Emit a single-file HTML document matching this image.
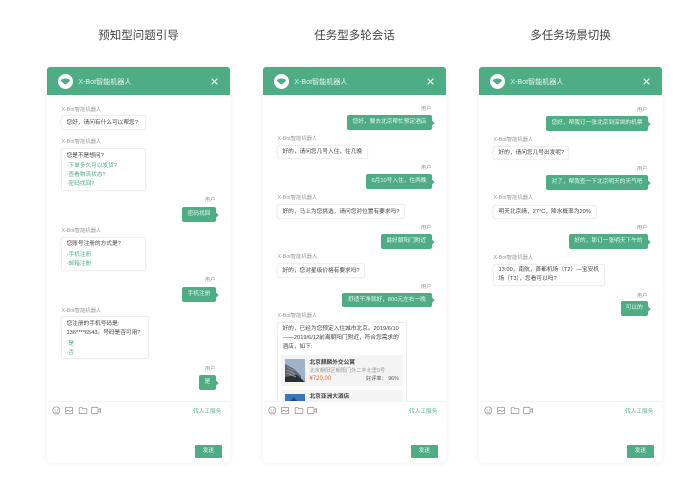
<!DOCTYPE html>
<html lang="zh"><head><meta charset="utf-8"><title>X-Bot</title>
<style>
html,body{margin:0;padding:0;background:#fff}
body{position:relative;width:700px;height:489px;overflow:hidden;font-family:"Liberation Sans","Noto Sans CJK SC",sans-serif;color:#555}
#w{position:absolute;left:0;top:0;width:700px;height:489px;filter:blur(.25px)}
h2{position:absolute;top:28px;margin:0;width:183px;text-align:center;font-size:11.5px;line-height:16px;font-weight:400;color:#444}
.c{position:absolute;top:0;width:183px;height:489px}
.bg{position:absolute;left:0;top:67px;width:183px;height:396px;background:#fff;border-radius:5px;box-shadow:0 0 6px rgba(0,0,0,.07)}
.hd{position:absolute;left:0;top:67px;width:183px;height:28px;background:#4fad85;border-radius:3px 3px 0 0}
.hd svg{position:absolute}
.ti{position:absolute;left:31.3px;top:9.500px;line-height:10px;font-size:7.100px;color:#e8f5ef;white-space:nowrap}
.m{position:absolute;left:0;top:0;width:183px;height:401px;overflow:hidden}
.t{position:absolute;margin-top:.4px;line-height:10px;font-size:5.7px;white-space:nowrap;color:#444}
.n{left:14.5px;font-size:5.3px;color:#999}
.r{right:14.5px;font-size:5.3px;color:#999}
.g{left:19.5px;color:#4fad85}
.x{left:19.5px}
.b{position:absolute;left:14px;background:#fff;border:.5px solid #efefef;border-radius:2px;box-sizing:border-box;box-shadow:0 0 2px rgba(0,0,0,.04)}
.b:before{content:"";position:absolute;left:-2px;top:4px;width:3px;height:3px;background:#fff;transform:rotate(45deg);border-left:.5px solid #efefef;border-bottom:.5px solid #efefef;box-sizing:border-box}
.u{position:absolute;right:14px;height:14.5px;background:#4fad85;border-radius:2px;color:#e9f6f0;font-size:5.7px;line-height:14.5px;text-align:center;white-space:nowrap}
.u:after{content:"";position:absolute;right:-1.5px;top:5.5px;width:3.5px;height:3.5px;background:#4fad85;transform:rotate(45deg)}
.ln{position:absolute;left:0;top:401px;width:183px;height:1px;background:#f4f4f4}
.ic{position:absolute;left:0;top:405px}
.lk{position:absolute;left:146px;top:406.500px;line-height:10px;font-size:5.7px;color:#5fb392;white-space:nowrap}
.bt{position:absolute;left:148px;top:445px;width:26.5px;height:12.500px;background:#4fad85;border-radius:1px;color:#e9f6f0;font-size:5.7px;line-height:12.500px;text-align:center}
.h{position:absolute;left:18px;width:122px;height:31px;background:#f4f4f4;border-radius:1px}
.im{position:absolute;left:4px;top:4px;width:20px;height:23px;overflow:hidden}
.hn{position:absolute;left:28.5px;line-height:8px;font-size:5.7px;color:#333;white-space:nowrap}
</style></head><body><div id="w">
<h2 style="left:47px">预知型问题引导</h2>
<h2 style="left:263px">任务型多轮会话</h2>
<h2 style="left:479px">多任务场景切换</h2>

<div class="c" style="left:47px">
<div class="bg"></div>
<div class="hd">
<svg style="left:11px;top:6.5px" width="15" height="15" viewBox="0 0 15 15"><circle cx="7.5" cy="7.5" r="7.5" fill="#fff"/><path d="M3 6.200C4.500 4 10.500 4 12 6.200C11.500 8 10 8.500 9.500 9C9 10.500 6 10.500 5.500 9C5 8.500 3.500 8 3 6.200Z" fill="#4fad85"/></svg>
<div class="ti">X-Bot智能机器人</div>
<svg style="left:164px;top:10.500px" width="7" height="7" viewBox="0 0 7 7"><path d="M.6.6L6.400 6.400M6.400.6L.6 6.400" stroke="#fff" stroke-width="1.100"/></svg>
</div>
<div class="m">
<div class="t n" style="top:104.500px">X-Bot智能机器人</div>
<div class="b" style="top:115px;width:85px;height:15px"></div>
<div class="t x" style="top:117.500px">您好，请问有什么可以帮您?</div>
<div class="t n" style="top:137px">X-Bot智能机器人</div>
<div class="b" style="top:148px;width:85px;height:43px"></div>
<div class="t x" style="top:150.500px">您是不是想问?</div>
<div class="t g" style="top:161px">·下单多久可以发货?</div>
<div class="t g" style="top:170px">·查看物流状态?</div>
<div class="t g" style="top:179px">·密码找回?</div>
<div class="t r" style="top:195px">用户</div>
<div class="u" style="top:207px;width:34px">密码找回</div>
<div class="t n" style="top:225.700px">X-Bot智能机器人</div>
<div class="b" style="top:236.500px;width:85px;height:34.500px"></div>
<div class="t x" style="top:238.700px">您账号注册的方式是?</div>
<div class="t g" style="top:249.700px">·手机注册</div>
<div class="t g" style="top:258.700px">·邮箱注册</div>
<div class="t r" style="top:275px">用户</div>
<div class="u" style="top:287px;width:34px">手机注册</div>
<div class="t n" style="top:305.500px">X-Bot智能机器人</div>
<div class="b" style="top:316px;width:87.500px;height:43px"></div>
<div class="t x" style="top:318.500px">您注册的手机号码是:</div>
<div class="t x" style="top:327.500px">136****6543。号码是否可用?</div>
<div class="t g" style="top:338.500px">·是</div>
<div class="t g" style="top:347.500px">·否</div>
<div class="t r" style="top:364px">用户</div>
<div class="u" style="top:375px;width:17px">是</div>
</div>
<div class="ln"></div>
<svg class="ic" width="60" height="12" viewBox="0 0 60 12" fill="none" stroke="#999" stroke-width=".8"><circle cx="9.300" cy="5.500" r="3.600"/><path d="M8 4.500v1M10.600 4.500v1M7.800 6.800c1 .8 2 .8 3 0"/><rect x="18.500" y="2.300" width="7" height="6.400" rx=".7"/><path d="M18.500 6.800L21 5l2 1.500 2.500-1.500"/><path d="M32.200 3.200a.6.6 0 0 1 .6-.6h2.200l.8 1h3.400a.6.6 0 0 1 .6.6v3.900a.6.6 0 0 1-.6.6h-6.400a.6.6 0 0 1-.6-.6z"/><rect x="44.500" y="2.300" width="6.500" height="6.400" rx=".7"/><path d="M51 5l2.500-1.500v4L51 6"/></svg>
<div class="lk">转人工服务</div>
<div class="bt">发送</div>
</div>

<div class="c" style="left:263px">
<div class="bg"></div>
<div class="hd">
<svg style="left:11px;top:6.500px" width="15" height="15" viewBox="0 0 15 15"><circle cx="7.500" cy="7.500" r="7.500" fill="#fff"/><path d="M3 6.200C4.500 4 10.500 4 12 6.200C11.500 8 10 8.500 9.500 9C9 10.500 6 10.500 5.500 9C5 8.500 3.500 8 3 6.200Z" fill="#4fad85"/></svg>
<div class="ti">X-Bot智能机器人</div>
<svg style="left:164px;top:10.500px" width="7" height="7" viewBox="0 0 7 7"><path d="M.6.6L6.400 6.400M6.400.6L.6 6.400" stroke="#fff" stroke-width="1.100"/></svg>
</div>
<div class="m">
<div class="t r" style="top:104px">用户</div>
<div class="u" style="top:115px;width:85px">您好，要去北京帮忙预定酒店</div>
<div class="t n" style="top:133.700px">X-Bot智能机器人</div>
<div class="b" style="top:144.500px;width:90.500px;height:14.500px"></div>
<div class="t x" style="top:146.800px">好的，请问您几号入住，住几晚</div>
<div class="t r" style="top:163px">用户</div>
<div class="u" style="top:174px;width:66px">6月10号入住，住两晚</div>
<div class="t n" style="top:192.700px">X-Bot智能机器人</div>
<div class="b" style="top:204px;width:127.500px;height:14.500px"></div>
<div class="t x" style="top:206.200px">好的，马上为您挑选，请问您对位置有要求吗?</div>
<div class="t r" style="top:222.700px">用户</div>
<div class="u" style="top:234px;width:51.500px">最好朝阳门附近</div>
<div class="t n" style="top:252px">X-Bot智能机器人</div>
<div class="b" style="top:263px;width:87.500px;height:14.500px"></div>
<div class="t x" style="top:265.200px">好的，您对星级价格有要求吗?</div>
<div class="t r" style="top:281.500px">用户</div>
<div class="u" style="top:292.500px;width:90px">舒适干净就好，800元左右一晚</div>
<div class="t n" style="top:311px">X-Bot智能机器人</div>
<div class="b" style="top:322px;width:129.500px;height:90px"></div>
<div class="t x" style="top:324px">好的，已经为您预定入住城市北京。2019/6/10</div>
<div class="t x" style="top:333px">——2019/6/12前离朝阳门附近，符合您需求的</div>
<div class="t x" style="top:341.700px">酒店，如下:</div>
<div class="h" style="top:355px">
<div class="im"><svg width="20" height="23" viewBox="0 0 20 23"><rect width="20" height="23" fill="#9fb2c8"/><path d="M0 5L9 10L16 17V23H0Z" fill="#5f646c"/><path d="M0 18L12 16L20 23H0Z" fill="#2e3033"/><path d="M2 8L9 12M2 11L10 15M2 14L11 18" stroke="#a5a8ad" stroke-width=".7"/></svg></div>
<div class="hn" style="top:3.500px;font-weight:700;color:#444">北京麒麟外交公寓</div>
<div class="hn" style="top:11.500px;font-size:5.200px;color:#999">北京朝阳区朝阳门外二丰北里9号</div>
<div class="hn" style="top:20px;color:#e0693d;font-size:6px">¥720.00</div>
<div class="hn" style="left:85px;top:20px;font-size:5.200px;color:#555">好评率： 96%</div>
</div>
<div class="h" style="top:389.500px">
<div class="im"><svg width="20" height="23" viewBox="0 0 20 23"><rect width="20" height="23" fill="#3a76b8"/><path d="M0 12L9 3L16 12V23H0Z" fill="#234a78"/></svg></div>
<div class="hn" style="top:3px;font-weight:700;color:#444">北京亚洲大酒店</div>
</div>
</div>
<div class="ln"></div>
<svg class="ic" width="60" height="12" viewBox="0 0 60 12" fill="none" stroke="#999" stroke-width=".8"><circle cx="9.300" cy="5.500" r="3.600"/><path d="M8 4.500v1M10.600 4.500v1M7.800 6.800c1 .8 2 .8 3 0"/><rect x="18.500" y="2.300" width="7" height="6.400" rx=".7"/><path d="M18.500 6.800L21 5l2 1.500 2.500-1.500"/><path d="M32.200 3.200a.6.6 0 0 1 .6-.6h2.200l.8 1h3.400a.6.6 0 0 1 .6.6v3.900a.6.6 0 0 1-.6.6h-6.400a.6.6 0 0 1-.6-.6z"/><rect x="44.500" y="2.300" width="6.500" height="6.400" rx=".7"/><path d="M51 5l2.500-1.500v4L51 6"/></svg>
<div class="lk">转人工服务</div>
<div class="bt">发送</div>
</div>

<div class="c" style="left:479px">
<div class="bg"></div>
<div class="hd">
<svg style="left:11px;top:6.500px" width="15" height="15" viewBox="0 0 15 15"><circle cx="7.500" cy="7.500" r="7.500" fill="#fff"/><path d="M3 6.200C4.500 4 10.500 4 12 6.200C11.500 8 10 8.500 9.500 9C9 10.500 6 10.500 5.500 9C5 8.500 3.500 8 3 6.200Z" fill="#4fad85"/></svg>
<div class="ti">X-Bot智能机器人</div>
<svg style="left:164px;top:10.500px" width="7" height="7" viewBox="0 0 7 7"><path d="M.6.6L6.400 6.400M6.400.6L.6 6.400" stroke="#fff" stroke-width="1.100"/></svg>
</div>
<div class="m">
<div class="t r" style="top:105px">用户</div>
<div class="u" style="top:116px;width:102px">您好，帮我订一张北京到深圳的机票</div>
<div class="t n" style="top:135px">X-Bot智能机器人</div>
<div class="b" style="top:145.500px;width:76px;height:14.500px"></div>
<div class="t x" style="top:147.700px">好的，请问您几号出发呢?</div>
<div class="t r" style="top:164px">用户</div>
<div class="u" style="top:175px;width:102px">对了，帮我查一下北京明天的天气吧</div>
<div class="t n" style="top:193px">X-Bot智能机器人</div>
<div class="b" style="top:204.500px;width:104px;height:14.500px"></div>
<div class="t x" style="top:206.700px">明天北京晴，27°C，降水概率为20%</div>
<div class="t r" style="top:223px">用户</div>
<div class="u" style="top:234px;width:79px">好的，那订一张明天下午的</div>
<div class="t n" style="top:253px">X-Bot智能机器人</div>
<div class="b" style="top:263.500px;width:111.500px;height:22.500px"></div>
<div class="t x" style="top:265px">13:00，南航，首都机场（T2）—宝安机</div>
<div class="t x" style="top:274px">场（T3），您看可以吗?</div>
<div class="t r" style="top:290.500px">用户</div>
<div class="u" style="top:301px;width:27.500px">可以的</div>
</div>
<div class="ln"></div>
<svg class="ic" width="60" height="12" viewBox="0 0 60 12" fill="none" stroke="#999" stroke-width=".8"><circle cx="9.300" cy="5.500" r="3.600"/><path d="M8 4.500v1M10.600 4.500v1M7.800 6.800c1 .8 2 .8 3 0"/><rect x="18.500" y="2.300" width="7" height="6.400" rx=".7"/><path d="M18.500 6.800L21 5l2 1.500 2.500-1.500"/><path d="M32.200 3.200a.6.6 0 0 1 .6-.6h2.200l.8 1h3.400a.6.6 0 0 1 .6.6v3.900a.6.6 0 0 1-.6.6h-6.400a.6.6 0 0 1-.6-.6z"/><rect x="44.500" y="2.300" width="6.500" height="6.400" rx=".7"/><path d="M51 5l2.500-1.500v4L51 6"/></svg>
<div class="lk">转人工服务</div>
<div class="bt">发送</div>
</div>
</div></body></html>
